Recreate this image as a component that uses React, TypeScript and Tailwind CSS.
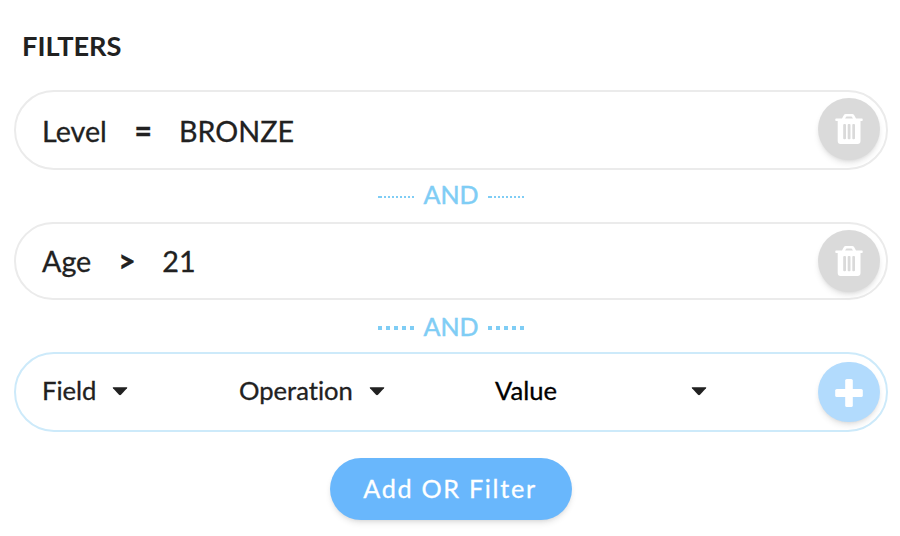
import React from "react";

function Trash() {
  return (
    <svg width="28" height="30" viewBox="0 0 28 30" fill="#fff">
      <path
        fillRule="evenodd"
        d="M1 4.6H7L8.6 1.4Q9.4 0 11 0H17Q18.6 0 19.4 1.4L21 4.6H27Q27.7 4.6 27.7 5.3V6.3Q27.7 7 27 7H25.5V27Q25.5 30 22.5 30H5.5Q2.7 30 2.7 27V7H1Q0.3 7 0.3 6.3V5.3Q0.3 4.6 1 4.6ZM10.1 4.6H17.9L17 3Q16.8 2.6 16.4 2.6H11.6Q11.2 2.6 11 3Z M9.2 10Q8.2 10 8.2 11V24.3Q8.2 25.3 9.2 25.3H10Q11 25.3 11 24.3V11Q11 10 10 10Z M13.6 10Q12.7 10 12.7 11V24.3Q12.7 25.3 13.6 25.3H14.5Q15.5 25.3 15.5 24.3V11Q15.5 10 14.5 10Z M18.2 10Q17.3 10 17.3 11V24.3Q17.3 25.3 18.2 25.3H19Q20 25.3 20 24.3V11Q20 10 19 10Z"
      />
    </svg>
  );
}

function Plus() {
  return (
    <svg width="28" height="28" viewBox="0 0 28 28" fill="#fff">
      <rect x="10.2" y="0" width="7.6" height="28" rx="1.6" />
      <rect x="0.2" y="10" width="27.6" height="8" rx="1.6" />
    </svg>
  );
}

function Caret() {
  return (
    <svg className="mb-px" width="16" height="9" viewBox="0 0 16 9">
      <path d="M1.3 0.2H14.7Q15.8 0.4 15 1.3L9 7.8Q8 8.7 7 7.8L1 1.3Q0.2 0.4 1.3 0.2Z" fill="#212121" />
    </svg>
  );
}

type FilterProps = { field: string; op: string; value: string; className: string; textClass: string };

function Filter({ field, op, value, className, textClass }: FilterProps) {
  return (
    <div className={`flex items-center rounded-full border-2 border-[#ebebeb] pl-[26px] pr-[6px] text-[28.7px] ${className}`}>
      <div className={`flex items-center ${textClass}`}>
        <span>{field}</span>
        <span className="mb-1 w-[17px] text-center text-[30px] font-black">{op}</span>
        <span>{value}</span>
      </div>
      <button className="ml-auto flex h-[62px] w-[62px] items-center justify-center rounded-full bg-[#dadada] shadow-md"><Trash /></button>
    </div>
  );
}

function Dots({ large }: { large: boolean }) {
  return (
    <svg width="36" height="4" viewBox="0 0 36 4" className="mt-1">
      {large ? (
        <path d="M0 2H36" stroke="#7fcdf5" strokeWidth="4" strokeDasharray="4 4" />
      ) : (
        <path d="M0 1H4M6 1H8M10 1H12M14 1H16M18 1H20M22 1H24M26 1H28M30 1H32M34 1H36" stroke="#7fcdf5" strokeWidth="2" />
      )}
    </svg>
  );
}

function And({ large = false }: { large?: boolean }) {
  return (
    <div className="flex h-[52px] items-center justify-center gap-[9px] text-[25px] text-[#7fcdf5] [-webkit-text-stroke:0.5px_currentColor]">
      <Dots large={large} />
      <span className={large ? "mt-0.5" : "mb-0.5"}>AND</span>
      <Dots large={large} />
    </div>
  );
}

export default function App() {
  return (
    <main className="h-[536px] bg-white pl-[14px] pr-3 pt-[30px] font-['Lato',sans-serif] text-[#212121] [-webkit-text-stroke:0.3px_currentColor] [font-variant-ligatures:none]">
      <h1 className="mb-7 ml-2 text-[27.2px] font-bold leading-8 [-webkit-text-stroke:0px]">FILTERS</h1>
      <Filter field="Level" op="=" value="BRONZE" className="h-20 pb-0.5" textClass="gap-[27.6px] pt-1.5" />
      <And />
      <Filter field="Age" op=">" value="21" className="h-[78px]" textClass="gap-[27px] pt-0.5" />
      <And large />
      <div className="flex h-20 items-center rounded-full border-2 border-[#cdeafa] pl-[26px] pr-[6px] text-[25.6px]">
        <div className="flex w-[197px] items-center gap-4"><span className="mb-[3px]">Field</span><Caret /></div>
        <div className="flex w-64 items-center gap-4"><span className="mb-[3px]">Operation</span><Caret /></div>
        <div className="flex w-[212px] items-center justify-between text-black"><span className="mb-[3px]">Value</span><Caret /></div>
        <button className="ml-auto flex h-[60px] w-[62px] items-center justify-center rounded-full bg-[#b2dbfd] pt-0.5 shadow-md"><Plus /></button>
      </div>
      <button className="mx-auto mt-[26px] flex h-[62px] w-[242px] items-center justify-center rounded-full bg-[#69b7fc] pr-[2px] text-[25.2px] tracking-[1.7px] text-white shadow-md">Add OR Filter</button>
    </main>
  );
}
